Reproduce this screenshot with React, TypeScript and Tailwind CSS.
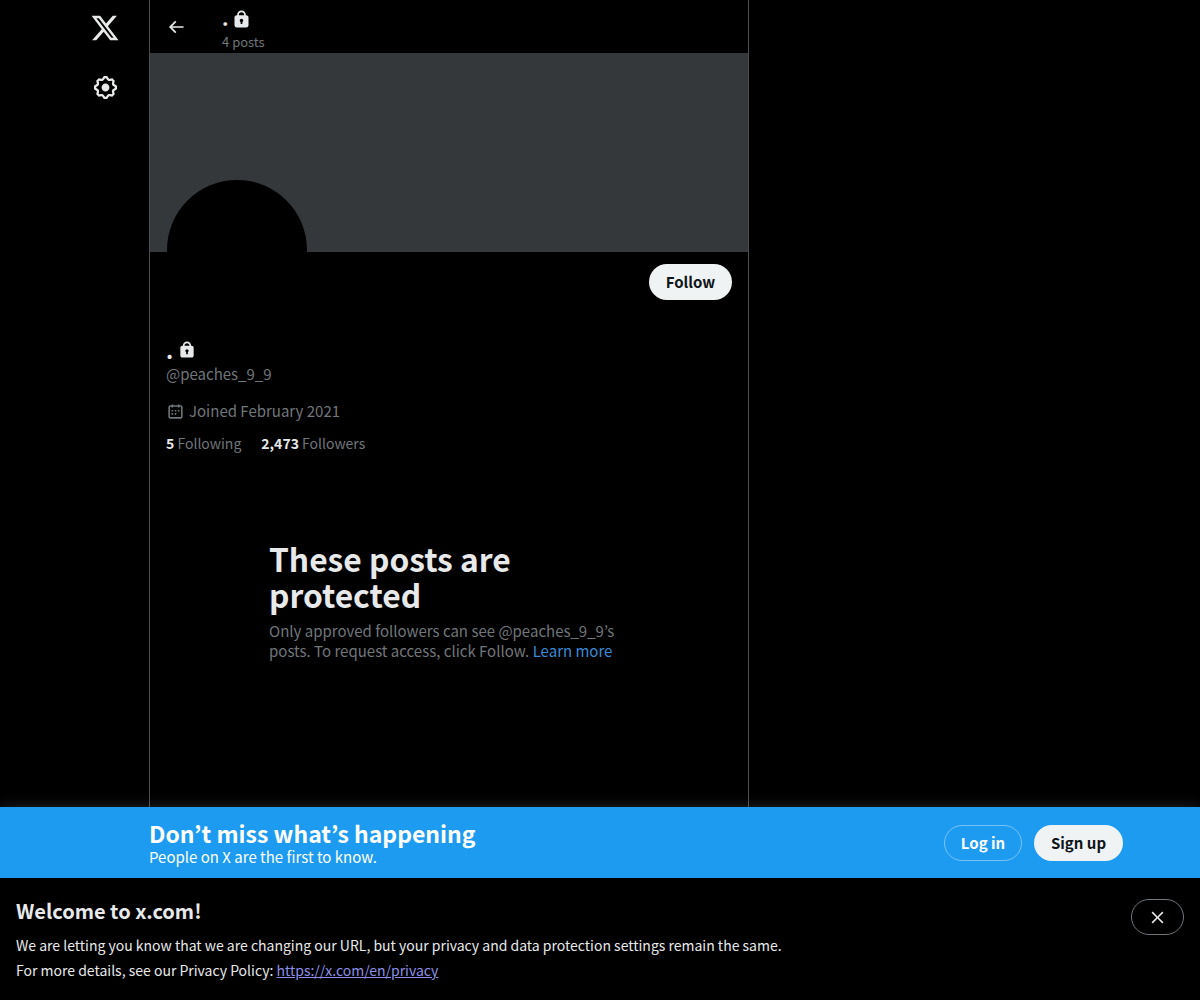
import React from "react";

function LockIcon({ className }: { className: string }) {
  return (
    <svg viewBox="0 0 24 24" className={className} fill="currentColor">
      <path d="M17.5 7H17v-.25c0-2.76-2.24-5-5-5s-5 2.24-5 5V7h-.5C5.12 7 4 8.12 4 9.5v9C4 19.88 5.12 21 6.5 21h11c1.39 0 2.5-1.12 2.5-2.5v-9C20 8.12 18.89 7 17.5 7zM13 14.73V17h-2v-2.27c-.59-.34-1-.99-1-1.73 0-1.1.9-2 2-2 1.11 0 2 .9 2 2 0 .74-.4 1.39-1 1.73zM15 7H9v-.25c0-1.66 1.35-3 3-3 1.66 0 3 1.34 3 3V7z" />
    </svg>
  );
}

function Sidebar() {
  return (
    <div className="w-[149px] shrink-0 pl-[90px] pt-[13px]">
      <div className="flex w-[30px] flex-col items-center">
        <svg viewBox="0 0 24 24" className="h-[30px] w-[30px] shrink-0 text-[#e7e9ea]" fill="currentColor">
          <path d="M18.244 2.25h3.308l-7.227 8.26 8.502 11.24H16.17l-5.214-6.817L4.99 21.75H1.68l7.73-8.835L1.254 2.25H8.08l4.713 6.231zm-1.161 17.52h1.833L7.084 4.126H5.117z" />
        </svg>
        <svg viewBox="0 0 24 24" className="mt-[31px] h-[27px] w-[27px] shrink-0 text-[#e7e9ea]" fill="currentColor">
          <path d="M10.54 1.75h2.92l1.57 2.36c.11.17.32.25.53.21l2.53-.59 2.17 2.17-.58 2.54c-.05.2.04.41.21.53l2.36 1.57v2.92l-2.36 1.57c-.17.12-.26.33-.21.53l.58 2.54-2.17 2.17-2.53-.59c-.21-.04-.42.04-.53.21l-1.57 2.36h-2.92l-1.58-2.36c-.11-.17-.32-.25-.52-.21l-2.54.59-2.17-2.17.58-2.54c.05-.2-.03-.41-.21-.53l-2.35-1.57v-2.92L4.1 8.97c.18-.12.26-.33.21-.53L3.73 5.9 5.9 3.73l2.54.59c.2.04.41-.04.52-.21l1.58-2.36zm1.07 2l-.98 1.47C10.05 6.08 9 6.5 7.99 6.27l-1.46-.34-.6.6.33 1.46c.24 1.01-.18 2.07-1.05 2.64l-1.46.98v.78l1.46.98c.87.57 1.29 1.63 1.05 2.64l-.33 1.46.6.6 1.46-.34c1.01-.23 2.06.19 2.64 1.05l.98 1.47h.78l.97-1.47c.58-.86 1.63-1.28 2.65-1.05l1.45.34.61-.6-.34-1.46c-.23-1.01.18-2.07 1.05-2.64l1.47-.98v-.78l-1.47-.98c-.87-.57-1.28-1.63-1.05-2.64l.34-1.46-.61-.6-1.45.34c-1.02.23-2.07-.19-2.65-1.05l-.97-1.47h-.78zM12 10.5c.83 0 1.5.67 1.5 1.5s-.67 1.5-1.5 1.5-1.5-.67-1.5-1.5.67-1.5 1.5-1.5zM8.5 12c0-1.93 1.57-3.5 3.5-3.5s3.5 1.57 3.5 3.5-1.57 3.5-3.5 3.5-3.5-1.57-3.5-3.5z" />
        </svg>
      </div>
    </div>
  );
}

function ProfileHeader() {
  return (
    <div className="flex h-[53px] items-start">
      <svg viewBox="0 0 24 24" className="ml-4 mt-[17px] h-5 w-5 text-[#e7e9ea]" fill="currentColor">
        <path d="M7.414 13l5.043 5.04-1.414 1.42L3.586 12l7.457-7.46 1.414 1.42L7.414 11H21v2H7.414z" />
      </svg>
      <div className="ml-[36px] pt-[6px]">
        <div className="flex h-[24px] items-center text-[20px] font-bold leading-6 text-[#e7e9ea]">
          <span>.</span>
          <LockIcon className="ml-[2px] mt-[2px] h-[21px] w-[21px]" />
        </div>
        <div className="mt-[4px] text-[13px] leading-4 text-[#71767b]">4 posts</div>
      </div>
    </div>
  );
}

function ProfileInfo() {
  return (
    <div className="px-4">
      <div className="flex h-[72px] items-start justify-end pt-3">
        <button className="h-9 w-[83px] rounded-full bg-[#eff3f4] text-[15px] font-bold leading-[18px] text-[#0f1419]">
          Follow
        </button>
      </div>
      <div className="mt-[13px] flex h-6 items-center text-[22px] font-bold leading-6 text-[#e7e9ea]">
        <span>.</span>
        <LockIcon className="ml-[4px] mt-[2px] h-5 w-5" />
      </div>
      <div className="mt-[3px] text-[15px] leading-5 text-[#71767b]">@peaches_9_9</div>
      <div className="mt-[17px] flex items-center text-[15px] leading-5 text-[#71767b]">
        <svg viewBox="0 0 24 24" className="mr-[4px] h-[19px] w-[19px]" fill="currentColor">
          <path d="M7 4V3h2v1h6V3h2v1h1.5C19.89 4 21 5.12 21 6.5v12c0 1.38-1.11 2.5-2.5 2.5h-13C4.12 21 3 19.88 3 18.5v-12C3 5.12 4.12 4 5.5 4H7zm0 2H5.5c-.27 0-.5.22-.5.5v12c0 .28.23.5.5.5h13c.28 0 .5-.22.5-.5v-12c0-.28-.22-.5-.5-.5H17v1h-2V6H9v1H7V6zm0 6h2v-2H7v2zm0 4h2v-2H7v2zm4-4h2v-2h-2v2zm0 4h2v-2h-2v2zm4-4h2v-2h-2v2z" />
        </svg>
        <span>Joined February 2021</span>
      </div>
      <div className="mt-[12px] flex text-[14px] leading-5 text-[#71767b]">
        <span className="mr-5">
          <b className="font-bold text-[#e7e9ea]">5</b> Following
        </span>
        <span>
          <b className="font-bold text-[#e7e9ea]">2,473</b> Followers
        </span>
      </div>
    </div>
  );
}

export default function App() {
  return (
    <div
      className="flex h-[1000px] w-[1200px] flex-col overflow-hidden bg-black"
      style={{ fontFamily: '"Noto Sans CJK JP", "Noto Sans", sans-serif' }}
    >
      <div className="flex min-h-0 flex-1">
        <Sidebar />
        <main className="w-[600px] shrink-0 border-x border-[#4a4d50]">
          <ProfileHeader />
          <div className="h-[199px] overflow-hidden bg-[#34383b] pl-[17px] pt-[127px]">
            <div className="h-[140px] w-[140px] rounded-full bg-black" />
          </div>
          <ProfileInfo />
          <div className="ml-[119px] mt-[87px] w-[360px]">
            <h2 className="text-[31.75px] font-bold leading-9 text-[#e7e9ea]">These posts are protected</h2>
            <p className="mt-[9px] text-[15px] leading-5 text-[#71767b]">
              Only approved followers can see @peaches_9_9’s posts. To request access, click Follow.{" "}
              <span className="text-[#3a8ad6]">Learn more</span>
            </p>
          </div>
        </main>
      </div>

      <div className="flex h-[71px] shrink-0 items-start bg-[#1d9bf0] shadow-[0_0_14px_rgba(255,255,255,0.15)]">
        <div className="ml-[149px] w-[600px] pt-3 text-white">
          <div className="text-[23px] font-bold leading-7">Don’t miss what’s happening</div>
          <div className="mt-[1px] text-[15px] leading-[18px]">People on X are the first to know.</div>
        </div>
        <button className="ml-[195px] mt-[18px] h-9 w-[78px] rounded-full border border-white/40 text-[15px] font-bold leading-[18px] text-white">
          Log in
        </button>
        <button className="ml-3 mt-[18px] h-9 w-[89px] rounded-full bg-[#eff3f4] text-[15px] font-bold leading-[18px] text-[#0f1419]">
          Sign up
        </button>
      </div>

      <div className="relative h-[122px] shrink-0 bg-black px-4 pt-[17px] text-[#e7e9ea]">
        <div className="text-[20px] font-bold leading-8">Welcome to x.com!</div>
        <p className="mt-[6px] text-[14px] leading-[25px]">
          We are letting you know that we are changing our URL, but your privacy and data protection settings remain the
          same.
          <br />
          For more details, see our Privacy Policy:{" "}
          <span className="text-[#8d8fe8] underline">https://x.com/en/privacy</span>
        </p>
        <button className="absolute right-4 top-[21px] flex h-9 w-[53px] items-center justify-center rounded-full border border-[#71767b] text-[#e7e9ea]">
          <svg viewBox="0 0 24 24" className="h-[19px] w-[19px]" fill="currentColor">
            <path d="M10.59 12L4.54 5.96l1.42-1.42L12 10.59l6.04-6.05 1.42 1.42L13.41 12l6.05 6.04-1.42 1.42L12 13.41l-6.04 6.05-1.42-1.42L10.59 12z" />
          </svg>
        </button>
      </div>
    </div>
  );
}
